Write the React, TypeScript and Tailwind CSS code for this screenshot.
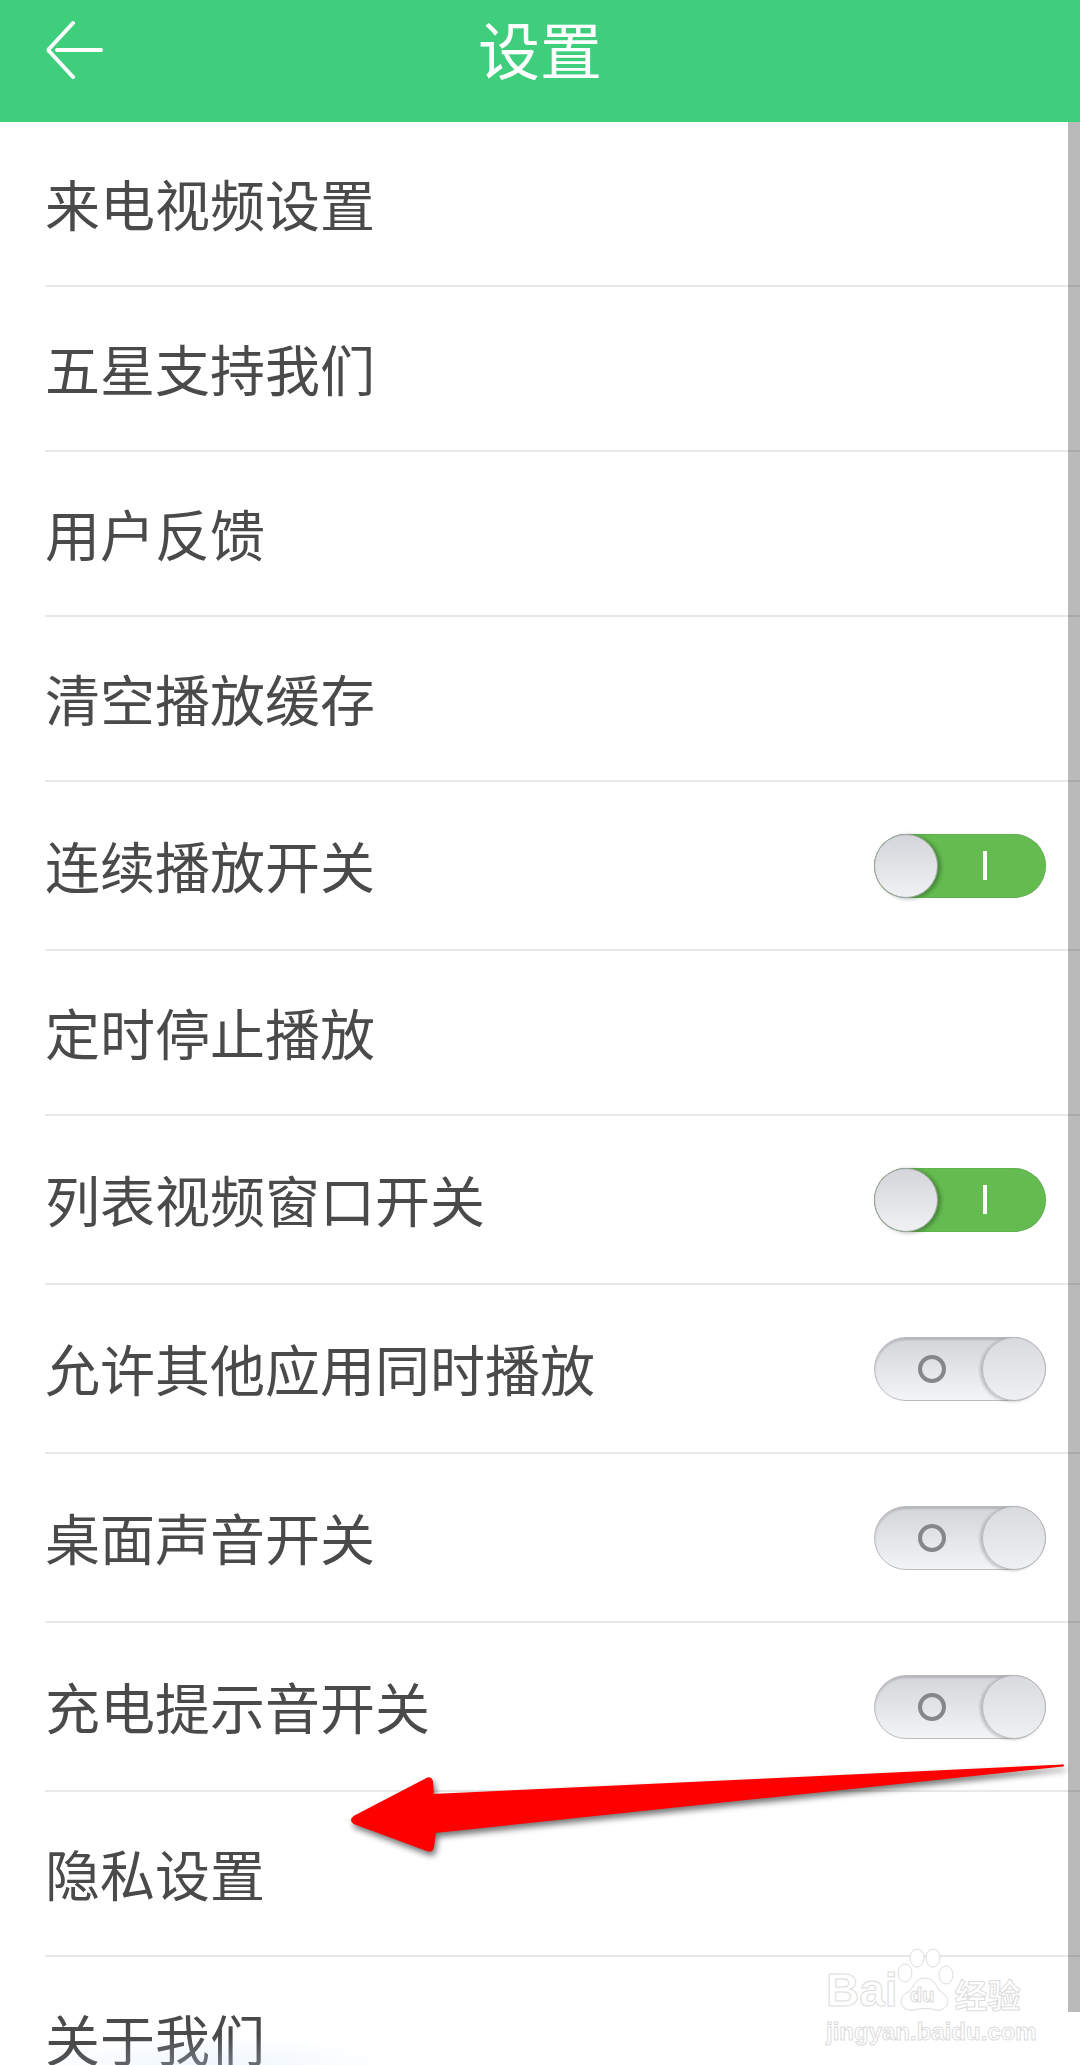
import { useState } from "react";

type Row = {
  label: string;
  toggle?: boolean;
};

const rows: Row[] = [
  { label: "来电视频设置" },
  { label: "五星支持我们" },
  { label: "用户反馈" },
  { label: "清空播放缓存" },
  { label: "连续播放开关", toggle: true },
  { label: "定时停止播放" },
  { label: "列表视频窗口开关", toggle: true },
  { label: "允许其他应用同时播放", toggle: false },
  { label: "桌面声音开关", toggle: false },
  { label: "充电提示音开关", toggle: false },
  { label: "隐私设置" },
  { label: "关于我们" },
];

function Toggle({ initial }: { initial: boolean }) {
  const [on, setOn] = useState(initial);
  if (on) {
    return (
      <button
        type="button"
        onClick={() => setOn(false)}
        className="flex h-[64px] w-[172px] shrink-0 items-center rounded-full bg-[#64bc50] shadow-[inset_0_0_1px_rgba(0,0,0,0.4)]"
      >
        <span className="h-[64px] w-[64px] shrink-0 rounded-full border border-[#a3a4a8] bg-gradient-to-b from-[#d3d5da] to-[#f0f1f3] shadow-[3px_1px_4px_rgba(0,0,0,0.3)]" />
        <span className="flex flex-1 justify-center pr-[14px]">
          <span className="h-[29px] w-[4px] bg-white" />
        </span>
      </button>
    );
  }
  return (
    <button
      type="button"
      onClick={() => setOn(true)}
      className="flex h-[64px] w-[172px] shrink-0 items-center rounded-full border border-[#b9bbbf] bg-gradient-to-b from-[#d3d5d9] to-[#f3f4f6] shadow-[inset_0_2px_2px_rgba(0,0,0,0.15)]"
    >
      <span className="flex flex-1 justify-center pl-[6px]">
        <span className="h-[28px] w-[28px] rounded-full border-[4px] border-[#85878a]" />
      </span>
      <span className="-mr-px h-[64px] w-[64px] shrink-0 rounded-full border border-[#b5b6ba] bg-gradient-to-b from-[#d8dadd] to-[#eff0f2] shadow-[-2px_1px_3px_rgba(0,0,0,0.2)]" />
    </button>
  );
}

function BackIcon() {
  return (
    <svg className="mt-[1px]" width="60" height="60" viewBox="0 0 60 60" fill="none" stroke="#ffffff" strokeWidth="4" strokeLinecap="round" strokeLinejoin="round">
      <path d="M28 4 L4 30 Q3 31 4 32 L28 58" />
      <path d="M12 31 H56" />
    </svg>
  );
}

function RedArrow() {
  return (
    <svg
      className="pointer-events-none absolute left-[340px] top-[1755px] drop-shadow-[2px_4px_3px_rgba(0,0,0,0.55)]"
      width="730"
      height="110"
      viewBox="340 1755 730 110"
    >
      <path
        d="M1063 1765.5 L433 1795 L432 1781 Q430 1776 425 1780 L354 1817 Q350 1820 354 1823 L427 1850 Q432 1852 433 1847 L435 1832 Z"
        fill="#ff0000"
        stroke="#ff0000"
        strokeWidth="2"
        strokeLinejoin="round"
      />
    </svg>
  );
}

function Watermark() {
  const outline = "text-transparent [-webkit-text-stroke:1px_#dcdcdc]";
  return (
    <div className="pointer-events-none absolute left-[826px] top-[1948px] w-[200px] font-['Liberation_Sans',sans-serif]">
      <div className="flex h-[68px] items-end">
        <span className={`text-[46px] leading-[52px] font-bold ${outline}`}>Bai</span>
        <svg className="mb-[2px] ml-[-2px] shrink-0" width="58" height="66" viewBox="0 0 58 66" fill="none" stroke="#dcdcdc" strokeWidth="1">
          <ellipse cx="9" cy="25" rx="7" ry="9" fill="#ffffff" />
          <ellipse cx="21" cy="10" rx="7" ry="9" fill="#ffffff" />
          <ellipse cx="37" cy="10" rx="7" ry="9" fill="#ffffff" />
          <ellipse cx="50" cy="27" rx="7" ry="9" fill="#ffffff" />
          <path d="M29 30 C40 30 40 42 48 46 C56 52 50 64 40 62 C33 60 25 60 18 62 C6 64 1 52 9 46 C18 42 18 30 29 30 Z" fill="#ffffff" />
          <text x="14" y="54" fontSize="20" fontWeight="700" fill="none" stroke="#dcdcdc" strokeWidth="1" fontFamily="Liberation Sans, sans-serif">du</text>
        </svg>
        <span className={`mb-[2px] ml-[1px] text-[33px] leading-[40px] font-bold whitespace-nowrap font-['Noto_Sans_CJK_SC',sans-serif] ${outline}`}>经验</span>
      </div>
      <div className={`mt-[3px] text-[24px] leading-[26px] font-bold whitespace-nowrap ${outline}`}>jingyan.baidu.com</div>
    </div>
  );
}

export default function App() {
  return (
    <div className="relative h-[2065px] w-[1080px] overflow-hidden bg-white font-['Noto_Sans_CJK_SC',sans-serif]">
      <header className="grid h-[122px] grid-cols-[1fr_auto_1fr] items-start bg-[#3fce7c] pt-[18px] pl-[45px]">
        <BackIcon />
        <h1 className="-ml-[45px] text-[62px] leading-[60px] font-normal text-white">设置</h1>
      </header>

      <div>
        {rows.map((row) => (
          <div
            key={row.label}
            className={
              row.toggle === undefined
                ? "ml-[45px] flex h-[165px] items-center justify-between border-b-2 border-[#e8e8e8] pr-[34px]"
                : "ml-[45px] flex h-[169px] items-center justify-between border-b-2 border-[#e8e8e8] pr-[34px]"
            }
          >
            <span className="pb-[2px] text-[55px] leading-none text-[#4a4a4a]">{row.label}</span>
            {row.toggle !== undefined && <Toggle initial={row.toggle} />}
          </div>
        ))}
      </div>

      {/* scrollbar, translucent so the row lines show through */}
      <div className="absolute right-0 top-[122px] h-[1890px] w-[12px] bg-black/[0.27]" />

      {/* faint glow along the bottom edge */}
      <div className="pointer-events-none absolute left-[30px] top-[2035px] h-[60px] w-[360px] rounded-full bg-[radial-gradient(closest-side,rgba(200,225,248,0.3),rgba(255,255,255,0))]" />

      <RedArrow />
      <Watermark />
    </div>
  );
}
